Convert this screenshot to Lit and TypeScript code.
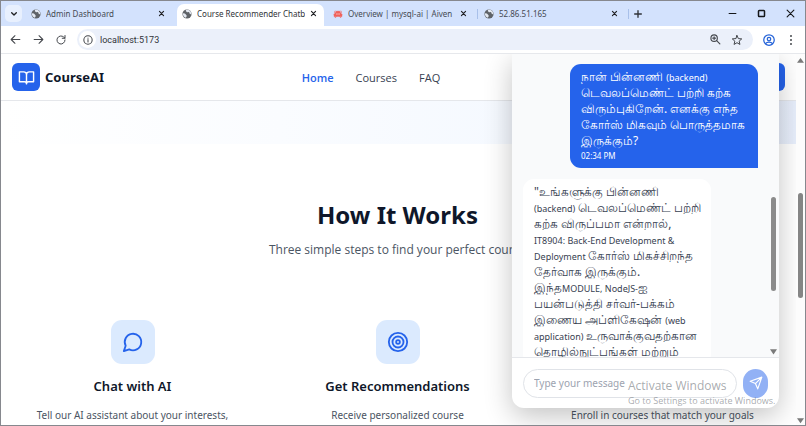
import { LitElement, html, css, svg } from "lit";
import { customElement } from "lit/decorators.js";

const base = css`
  * { box-sizing: border-box; }
  button, input { font: inherit; color: inherit; border: 0; background: none; padding: 0; margin: 0; outline: none; }
  button { display: inline-flex; align-items: center; justify-content: center; flex: none; }
  a { color: inherit; text-decoration: none; }
  svg { display: block; flex: none; fill: none; stroke: currentColor; stroke-linecap: round; stroke-linejoin: round; }
  h1, h2, h3, p { margin: 0; }
`;

const icon = (size: number, body: unknown, width = 2) =>
  html`<svg width=${size} height=${size} viewBox="0 0 24 24" stroke-width=${width} aria-hidden="true">${body}</svg>`;

const close = svg`<path d="M5 5l14 14M19 5L5 19"/>`;
const globe = svg`<circle cx="12" cy="12" r="11" fill="currentColor" stroke="none"/><path d="M2 10l5 1 4 4v3l-2 3C5 20 2 16 2 10zM10 2l-1 3 3 3 5-1 1 4 4 2c1-5-3-11-9-11l-3 0z" fill="#e4e9f2" stroke="none"/>`;
const crab = svg`<path d="M6 9c1-4 4-5 6-3 2-2 5-1 6 3l4 4-1 6-3-3 1 5-4-3h-6l-4 3 1-5-3 3-1-6z" fill="#f0615b" stroke="#f0615b" stroke-width="1"/><path d="M4 8l1-3M20 8l-1-3" stroke="#f0615b"/><path d="M9 12h1M14 12h1" stroke="#ffffff"/>`;

interface Tab { title: string; art: unknown; active?: boolean; }

const tabs: Tab[] = [
  { title: "Admin Dashboard", art: globe },
  { title: "Course Recommender Chatbot", art: globe, active: true },
  { title: "Overview | mysql-ai | Aiven", art: crab },
  { title: "52.86.51.165", art: globe },
];

@customElement("browser-bar")
export class BrowserBar extends LitElement {
  static styles = [base, css`
    :host { display: block; font-family: "Noto Sans", "Open Sans", sans-serif; font-size: 8px; color: #454a52; }
    .strip { display: flex; align-items: center; height: 25px; background: #d3e2fd; padding: 0 10px 0 4px; }
    .menu { width: 17px; height: 17px; margin-right: 3px; border-radius: 5px; background: #e8f0fe; color: #202124; }
    .tab { display: flex; align-items: center; gap: 5px; width: 150px; height: 25px; padding: 0 10px 0 6px; flex: 0 1 auto; min-width: 0; }
    .tab.active { background: #ffffff; border-radius: 7px 7px 0 0; align-self: flex-end; height: 22px; margin: 0 3px 0 2px; padding: 0 7px 3px 5px; width: 147px; color: #303338; }
    .tab svg { color: #5f6368; }
    .title { flex: 1; min-width: 0; overflow: hidden; white-space: nowrap; }
    .tab button svg { color: #202124; }
    .rule { width: 1px; height: 10px; background: #a8c0ea; }
    .plus { margin-left: 5px; color: #303338; }
    .window { display: flex; gap: 20px; margin-left: auto; color: #15171a; }
    .tools { display: flex; align-items: center; height: 28px; background: #ffffff; border-bottom: 1px solid #e6e8ec; padding: 0 8px 0 8px; gap: 10px; color: #45484d; }
    .url { flex: 1; display: flex; align-items: center; height: 21px; gap: 4px; border-radius: 11px; background: #ebf0fa; padding: 0 10px 0 2px; }
    .info { width: 17px; height: 17px; border-radius: 50%; background: #ffffff; }
    .url input { flex: 1; min-width: 0; font-family: Roboto, sans-serif; font-size: 9px; color: #303338; }
    .url .star { margin-left: 6px; }
    .profile { color: #2563d8; }
  `];
  render() {
    return html`
      <div class="strip">
        <button class="menu" aria-label="Search tabs">${icon(8, svg`<path d="M5 8l7 7 7-7"/>`, 4)}</button>
        ${tabs.map((t, i) => html`
          <div class="tab ${t.active ? "active" : ""}">
            ${icon(10, t.art)}<span class="title">${t.title}</span>
            <button aria-label="Close tab">${icon(7, close, 4)}</button>
          </div>${i > 1 ? html`<span class="rule"></span>` : ""}`)}
        <button class="plus" aria-label="New tab">${icon(8, svg`<path d="M12 2v20M2 12h20"/>`, 4)}</button>
        <div class="window">
          <button aria-label="Minimize">${icon(9, svg`<path d="M3 12h18"/>`, 3)}</button>
          <button aria-label="Maximize">${icon(9, svg`<rect x="4" y="4" width="16" height="16" rx="2"/>`, 4)}</button>
          <button aria-label="Close">${icon(9, svg`<path d="M3 3l18 18M21 3L3 21"/>`, 3)}</button>
        </div>
      </div>
      <div class="tools">
        <button aria-label="Back">${icon(13, svg`<path d="M20 12H5M11 5l-7 7 7 7"/>`)}</button>
        <button aria-label="Forward">${icon(13, svg`<path d="M4 12h15M13 5l7 7-7 7"/>`)}</button>
        <button aria-label="Reload">${icon(12, svg`<path d="M20 12a8 8 0 1 1-2.500-5.800L20 8.500M20 3v5.500h-5.500"/>`)}</button>
        <div class="url">
          <button class="info" aria-label="Site information">${icon(10, svg`<circle cx="12" cy="12" r="10"/><path d="M12 11v6M12 7v.5"/>`, 2.5)}</button>
          <input aria-label="Address" value="localhost:5173">
          <button aria-label="Zoom">${icon(11, svg`<circle cx="9" cy="9" r="7"/><path d="M14.500 14.500l7 7M6 9h6M9 6v6"/>`, 2.5)}</button>
          <button class="star" aria-label="Bookmark">${icon(12, svg`<path d="M12 3l2.700 6.200 6.800.6-5.200 4.500 1.600 6.600L12 17.400l-5.900 3.500 1.600-6.600L2.500 9.800l6.800-.6z"/>`)}</button>
        </div>
        <button class="profile" aria-label="Profile">${icon(12, svg`<circle cx="12" cy="12" r="10.500"/><circle cx="12" cy="10" r="3.500"/><path d="M5 19c3-4 11-4 14 0"/>`, 2.5)}</button>
        <button aria-label="Menu">${icon(12, svg`<path d="M12 4v.1M12 12v.1M12 20v.1"/>`, 4)}</button>
      </div>`;
  }
}

const steps = [
  { title: "Chat with AI", text: "Tell our AI assistant about your interests,", art: svg`<path d="M7.900 20A9 9 0 1 0 4 16.100L2 22Z"/>` },
  { title: "Get Recommendations", text: "Receive personalized course", art: svg`<circle cx="12" cy="12" r="10"/><circle cx="12" cy="12" r="6"/><circle cx="12" cy="12" r="2"/>` },
  { title: "Start Learning", text: "Enroll in courses that match your goals", art: svg`<path d="M22 10 12 5 2 10l10 5z"/><path d="M6 12v5c3 3 9 3 12 0v-5"/>` },
];

@customElement("course-page")
export class CoursePage extends LitElement {
  static styles = [base, css`
    :host { display: block; overflow: hidden; background: #ffffff; }
    header { display: grid; grid-template-columns: 1fr auto 1fr; align-items: center; height: 47px; padding: 0 11px; border-bottom: 1px solid #e5e7eb; }
    .brand { display: flex; align-items: center; gap: 5px; font-size: 13px; font-weight: 700; color: #0f172a; }
    .logo { display: grid; place-items: center; width: 28px; height: 28px; border-radius: 6px; background: #2563eb; color: #ffffff; }
    nav { display: flex; gap: 22px; font-family: "Open Sans", sans-serif; font-size: 11px; font-weight: 500; color: #374151; margin-right: 55px; }
    nav .on { color: #2563eb; font-weight: 600; }
    .cta { justify-self: end; height: 28px; padding: 0 12px; border-radius: 6px; background: #2563eb; color: #ffffff; font-size: 10px; }
    .hero { height: 43px; background: linear-gradient(90deg, #ffffff, #fafcff 35%, #f5f9ff 64%, #e8effc); }
    .how { padding: 53px 13px 0 11px; text-align: center; }
    h2 { font-size: 24px; line-height: 36px; font-weight: 700; color: #0f172a; }
    .lead { font-family: "Open Sans", sans-serif; font-size: 12px; line-height: 20px; margin-top: 7px; color: #4b5563; }
    .grid { display: grid; grid-template-columns: repeat(3, 1fr); gap: 24px; margin-top: 60px; }
    .tile { display: grid; place-items: center; width: 44px; height: 44px; margin: 0 auto; border-radius: 11px; background: #dbeafe; color: #2563eb; }
    h3 { font-size: 13px; line-height: 20px; font-weight: 600; margin-top: 12px; color: #0f172a; }
    .grid p { font-size: 10px; line-height: 18px; margin-top: 10px; color: #4b5563; }
  `];
  render() {
    return html`
      <header>
        <a class="brand" href="#"><span class="logo">${icon(17, svg`<path d="M2 4h6a4 4 0 0 1 4 4v13a3 3 0 0 0-3-3H2zM22 4h-6a4 4 0 0 0-4 4v13a3 3 0 0 1 3-3h7z"/>`)}</span>CourseAI</a>
        <nav><a class="on" href="#">Home</a><a href="#">Courses</a><a href="#">FAQ</a></nav>
        <button class="cta">Start</button>
      </header>
      <div class="hero"></div>
      <section class="how">
        <h2>How It Works</h2>
        <p class="lead">Three simple steps to find your perfect course</p>
        <div class="grid">${steps.map((s) => html`
          <article><div class="tile">${icon(22, s.art)}</div><h3>${s.title}</h3><p>${s.text}</p></article>`)}
        </div>
      </section>`;
  }
}

const question = [
  "நான் பின்னணி (backend)",
  "டெவலப்மெண்ட் பற்றி கற்க",
  "விரும்புகிறேன். எனக்கு எந்த",
  "கோர்ஸ் மிகவும் பொருத்தமாக",
  "இருக்கும்?",
];
const answer = [
  "\"உங்களுக்கு பின்னணி",
  "(backend) டெவலப்மெண்ட் பற்றி",
  "கற்க விருப்பமா என்றால்,",
  "IT8904: Back-End Development &",
  "Deployment கோர்ஸ் மிகச்சிறந்த",
  "தேர்வாக இருக்கும்.",
  "இந்தMODULE, NodeJS-ஐ",
  "பயன்படுத்தி சர்வர்-பக்கம்",
  "இணைய அப்ளிகேஷன் (web",
  "application) உருவாக்குவதற்கான",
  "தொழில்நுட்பங்கள் மற்றும்",
];

const lines = (list: string[]) => list.map((l) => html`<span class="line">${l.split(/([(A-Za-z][\x20-\x7e]*)/).map((part, i) =>
  i % 2 ? html`<span class="latin">${part}</span>` : part)}</span>`);

@customElement("chat-panel")
export class ChatPanel extends LitElement {
  static styles = [base, css`
    :host { display: flex; flex-direction: column; background: #ffffff; border-radius: 0 0 12px 12px; box-shadow: 0 8px 28px rgba(0, 0, 0, 0.24); }
    .log { flex: 1; min-height: 0; display: flex; background: #f9fafb; overflow: hidden; }
    .messages { flex: 1; min-width: 0; display: flex; flex-direction: column; gap: 11px; padding: 10px 10px 0 11px; }
    .bubble { flex: none; font-size: 12px; line-height: 16px; border-radius: 11px; width: 188px; }
    .line { display: block; white-space: pre; height: 16px; }
    .latin { font-size: 9px; }
    .mine { align-self: flex-end; padding: 5px 11px 6px; background: #2563eb; color: #ffffff; border-bottom-right-radius: 0; }
    .mine time { display: block; font-size: 8px; line-height: 13px; }
    .theirs { align-self: flex-start; padding: 5px 11px; background: #ffffff; color: #374151; }
    .bar { width: 11px; display: flex; flex-direction: column; align-items: center; justify-content: flex-end; gap: 57px; padding-bottom: 2px; }
    .thumb { width: 5px; height: 94px; border-radius: 3px; background: #8b8b8b; }
    .bar svg { fill: #7a7a7a; stroke: none; }
    form { display: flex; align-items: center; gap: 6px; height: 51px; padding: 0 11px; border-top: 1px solid #e5e7eb; }
    input { flex: 1; min-width: 0; height: 29px; padding: 0 10px; border: 1px solid #e0e3e8; border-radius: 15px; font-size: 10px; }
    input::placeholder { color: #9ca3af; opacity: 1; }
    .send { width: 25px; height: 29px; border-radius: 13px; background: #92b1f5; color: #ffffff; }
  `];
  render() {
    return html`
      <div class="log">
        <div class="messages">
          <div class="bubble mine">${lines(question)}<time>02:34 PM</time></div>
          <div class="bubble theirs">${lines(answer)}</div>
        </div>
        <div class="bar"><span class="thumb"></span>${icon(7, svg`<path d="M0 4h24L12 22z"/>`)}</div>
      </div>
      <form>
        <input aria-label="Message" placeholder="Type your message">
        <button class="send" type="button" aria-label="Send">${icon(14, svg`<path d="M22 2 15 22l-4-9-9-4zM22 2 11 13"/>`)}</button>
      </form>`;
  }
}

@customElement("app-root")
export class AppRoot extends LitElement {
  static styles = [base, css`
    :host { display: flex; flex-direction: column; height: 100vh; overflow: hidden; border: 1px solid #86888e; background: #ffffff; box-sizing: border-box; font-family: "Noto Sans", "Open Sans", sans-serif; }
    .view { flex: 1; min-height: 0; display: flex; position: relative; overflow: hidden; }
    course-page { flex: 1; min-width: 0; }
    chat-panel { position: absolute; top: 0; right: 26px; bottom: 17px; width: 267px; }
    .scroll { width: 9px; display: flex; flex-direction: column; align-items: center; justify-content: space-between; padding: 3px 0 1px; background: #fcfcfc; position: relative; }
    .scroll svg { fill: #7a7a7a; stroke: none; }
    .thumb { width: 5px; height: 105px; border-radius: 3px; background: #858585; }
    .scroll .thumb { margin-top: 10px; }
    .notice { position: absolute; right: 32px; bottom: 18px; color: rgba(120, 124, 130, 0.65); white-space: nowrap; width: 145px; font-family: "Open Sans", sans-serif; }
    .notice strong { display: block; font-size: 12px; line-height: 18px; font-weight: 400; }
    .notice span { display: block; font-size: 9px; line-height: 12px; }
  `];
  render() {
    return html`
      <browser-bar></browser-bar>
      <main class="view">
        <course-page></course-page>
        <chat-panel></chat-panel>
        <div class="scroll">${icon(7, svg`<path d="M0 20h24L12 3z"/>`)}<span class="thumb"></span>${icon(7, svg`<path d="M0 4h24L12 21z"/>`)}</div>
        <div class="notice"><strong>Activate Windows</strong><span>Go to Settings to activate Windows.</span></div>
      </main>`;
  }
}
